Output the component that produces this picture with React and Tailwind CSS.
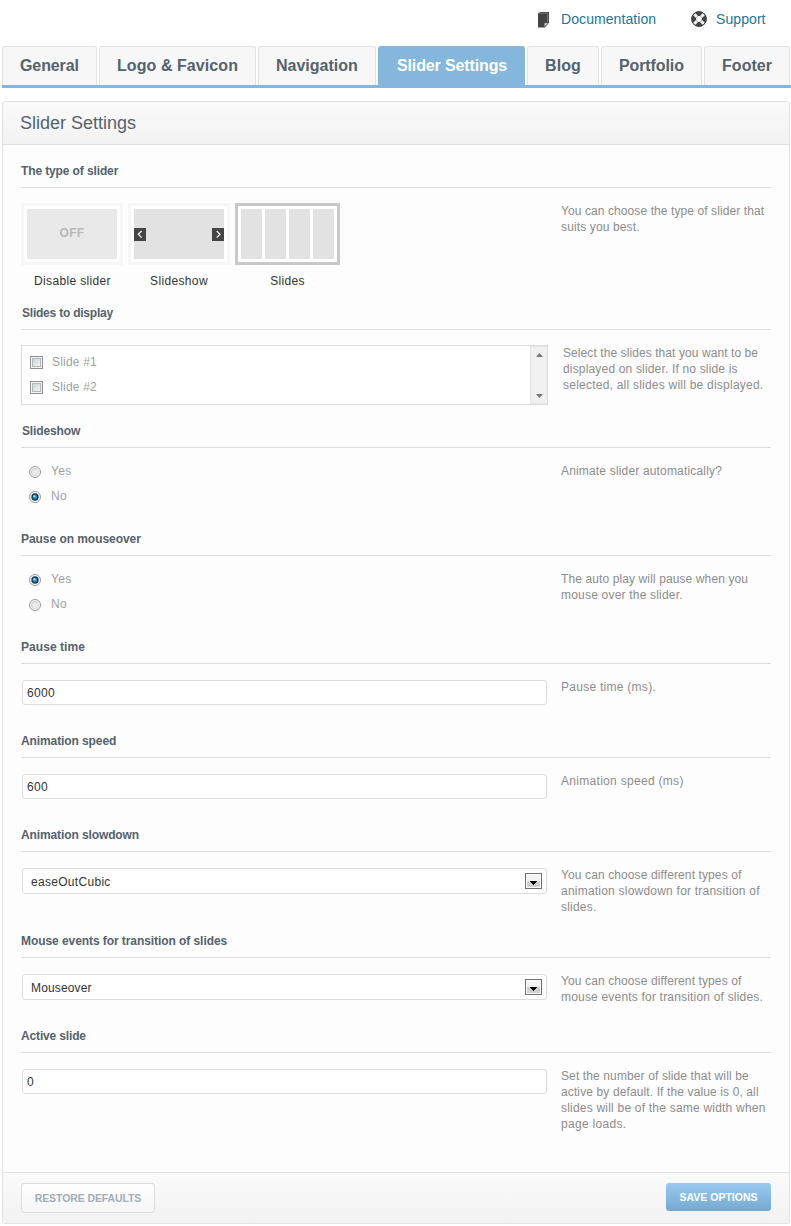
import React from 'react';

const tabs = [
  { label: 'General', cls: 'w-[95px] pl-[17px] tracking-[-0.1px]' },
  { label: 'Logo & Favicon', cls: 'w-[157px] pl-[17px] tracking-[0.07px]' },
  { label: 'Navigation', cls: 'w-[118px] pl-[17px]' },
  { label: 'Slider Settings', cls: 'w-[147px] pl-[18px] tracking-[-0.13px]', active: true },
  { label: 'Blog', cls: 'w-[72px] pl-[17px] tracking-[0.1px]' },
  { label: 'Portfolio', cls: 'w-[101px] pl-[17px] tracking-[-0.1px]' },
  { label: 'Footer', cls: 'w-[86px] pl-[17px] tracking-[0.05px]' },
];

function Tab({ label, cls, active }) {
  return (
    <a
      className={`h-[39px] shrink-0 rounded-t-[3px] border border-b-0 pt-[9px] text-base leading-5 font-bold whitespace-nowrap ${cls} ${
        active ? 'border-[#85b7dd] bg-[#85b7dd] text-white' : 'border-[#e2e2e2] bg-[#f7f7f7] text-[#54626e]'
      }`}
    >
      {label}
    </a>
  );
}

function Section({ title, titleCls = '', height, help, helpPad = '', children }) {
  return (
    <section className={`px-[18px] ${height}`}>
      <h3 className={`h-[25px] border-b border-[#dcdcdc] text-xs leading-4 font-bold text-[#54626e] ${titleCls}`}>{title}</h3>
      <div className="flex">
        <div className="w-[540px] shrink-0">{children}</div>
        <div className={`pt-[15px] text-xs leading-4 whitespace-nowrap text-[#8c8c8c] ${helpPad}`}>
          {help.map(([line, tracking]) => (
            <div key={line} className={tracking}>{line}</div>
          ))}
        </div>
      </div>
    </section>
  );
}

function Radio({ label, checked }) {
  return (
    <label className="flex h-[25px] items-start pl-2 text-xs leading-4 tracking-[0.3px] text-[#a0a0a0]">
      <svg className="mt-[3px] mr-[10px] h-3 w-3" viewBox="0 0 12 12">
        <circle cx="6" cy="6" r="5.5" fill="#f8f8f8" stroke="#97999b" strokeWidth="1" />
        {checked ? (
          <>
            <circle cx="6" cy="6" r="3.7" fill="#16395c" />
            <circle cx="6" cy="6" r="2.3" fill="#2384bf" />
            <circle cx="5.4" cy="5.2" r="1.2" fill="#8ed8f2" />
          </>
        ) : (
          <>
            <circle cx="6" cy="6" r="4" fill="#cfd1d4" />
            <circle cx="6.4" cy="6.5" r="3.3" fill="#e9e9eb" />
          </>
        )}
      </svg>
      {label}
    </label>
  );
}

function Check({ label }) {
  return (
    <label className="flex h-[25px] items-start pl-2 text-xs leading-4 tracking-[0.2px] text-[#a0a0a0]">
      <span className="mt-[2px] mr-[9px] flex h-[13px] w-[13px] items-center justify-center border border-[#8e8f8f] bg-[#f4f4f4]">
        <span className="h-[9px] w-[9px] border border-[#b4b9bf] bg-linear-to-br from-[#cdd1d8] to-[#f6f6f6]" />
      </span>
      {label}
    </label>
  );
}

function TextBox({ value }) {
  return (
    <div className="mt-4 ml-px h-[25px] w-[525px] rounded-[3px] border border-[#dcdcdc] bg-white pl-1 text-xs leading-[24px] tracking-[0.3px] text-[#333]">
      {value}
    </div>
  );
}

function SelectBox({ value, tracking }) {
  return (
    <div className="mt-4 ml-px flex h-[26px] w-[525px] justify-between rounded-[3px] border border-[#dcdcdc] bg-white pr-1 pl-2 text-xs leading-[26px] text-[#333]">
      <span className={tracking}>{value}</span>
      <span className="mt-1 flex h-4 w-[17px] border border-[#707070] bg-white p-px">
        <span className="flex h-full w-full justify-center bg-linear-to-b from-[#f3f3f3] from-50% to-[#cfcfcf] to-50% pt-[6px]">
          <svg width="7" height="4" viewBox="0 0 7 4" shapeRendering="crispEdges">
            <path d="M0 0h7v1h-1v1h-1v1h-1v1h-1v-1h-1v-1h-1v-1h-1z" fill="#000" />
          </svg>
        </span>
      </span>
    </div>
  );
}

function Thumb({ label, border, width, tracking, children }) {
  return (
    <div className={`flex shrink-0 flex-col items-center ${width}`}>
      <div className={`h-[62px] w-full border-[3px] bg-white p-[3px] ${border}`}>{children}</div>
      <span className={`mt-2 text-xs leading-4 whitespace-nowrap text-[#333] ${tracking}`}>{label}</span>
    </div>
  );
}

function Chevron({ d }) {
  return (
    <svg className="h-[13px] w-3 bg-[#444]" viewBox="0 0 12 13">
      <path d={d} fill="none" stroke="#f2f2f2" strokeWidth="1.3" />
    </svg>
  );
}

function DocIcon() {
  return (
    <svg width="12" height="16" viewBox="0 0 12 16">
      <path d="M0 1.5L2 0H11v10.5L7 15.5H0z" fill="#444" />
      <path d="M1 1.2h8.6v9" fill="none" stroke="#8a8a8a" strokeWidth=".8" />
      <path d="M6.3 14.8V11h4z" fill="#eee" stroke="#555" strokeWidth=".6" />
    </svg>
  );
}

function SupportIcon() {
  return (
    <svg width="16" height="16" viewBox="0 0 16 16">
      <circle cx="8" cy="8" r="5.3" fill="none" stroke="#444" strokeWidth="4.8" />
      <path d="M2.9 2.9l2.9 2.9M10.2 10.2l2.9 2.9M13.1 2.9l-2.9 2.9M5.8 10.2l-2.9 2.9" stroke="#f2f2f2" strokeWidth="3" />
      <circle cx="8" cy="8" r="7.3" fill="none" stroke="#444" strokeWidth="1" />
    </svg>
  );
}

export default function App() {
  return (
    <div className="h-[1226px] w-[791px] overflow-hidden bg-white pl-[2px] font-['Liberation_Sans',Arial,sans-serif]">
      <div className="flex h-[46px] items-start pt-[11px] text-sm leading-4 tracking-[0.08px] text-[#21759b]">
        <a className="ml-[536px] flex w-[152px] items-start">
          <span className="mr-[11px] pt-px"><DocIcon /></span>
          Documentation
        </a>
        <a className="flex items-start">
          <span className="mr-[9px] ml-px"><SupportIcon /></span>
          Support
        </a>
      </div>
      <nav className="flex h-[42px] gap-[2px] border-b-[3px] border-[#85b7dd]">
        {tabs.map((t) => (
          <Tab key={t.label} {...t} />
        ))}
      </nav>

      <main className="mt-[13px] h-[1123px] w-[788px] rounded-[3px] border border-[#e2e2e2] bg-[#fdfdfd]">
        <h2 className="h-[43px] rounded-t-[2px] border-b border-[#e0e0e0] bg-linear-to-b from-[#fafafa] to-[#f2f2f2] pl-[17px] text-lg leading-[42px] text-[#54626e]">
          Slider Settings
        </h2>
        <div className="pt-[18px]">
          <Section
            title="The type of slider"
            titleCls="tracking-[-0.12px]"
            height="h-[142px]"
            help={[['You can choose the type of slider that', 'tracking-[0.09px]'], ['suits you best.', 'tracking-[0.13px]']]}
          >
            <div className="flex gap-[5px] pt-[15px]">
              <Thumb label="Disable slider" border="border-[#f7f7f7]" width="w-[102px]" tracking="tracking-[0.35px] pl-px">
                <div className="h-full bg-[#e9e9e9] text-center text-xs leading-[49px] font-bold tracking-[0.3px] text-[#b8b8b8]">OFF</div>
              </Thumb>
              <Thumb label="Slideshow" border="border-[#f7f7f7]" width="w-[102px]" tracking="tracking-[0.35px]">
                <div className="flex h-full items-center justify-between bg-[#e2e2e2]">
                  <Chevron d="M7.6 3l-3.3 3.3 3.3 3.3" />
                  <Chevron d="M4.7 3l3.3 3.3-3.3 3.3" />
                </div>
              </Thumb>
              <Thumb label="Slides" border="border-[#c8c8c8]" width="w-[105px]" tracking="tracking-[0.3px]">
                <div className="grid h-full grid-cols-4 gap-[3px]">
                  <div className="bg-[#e2e2e2]" />
                  <div className="bg-[#e2e2e2]" />
                  <div className="bg-[#e2e2e2]" />
                  <div className="bg-[#e2e2e2]" />
                </div>
              </Thumb>
            </div>
          </Section>
          <Section
            title="Slides to display"
            titleCls="pl-px tracking-[-0.22px]"
            height="h-[118px]"
            helpPad="pl-[2px]"
            help={[
              ['Select the slides that you want to be', 'tracking-[0.08px]'],
              ['displayed on slider. If no slide is', 'tracking-[0.17px]'],
              ['selected, all slides will be displayed.', 'tracking-[0.23px]'],
            ]}
          >
            <div className="mt-[15px] flex h-[60px] w-[527px] justify-between border border-[#dcdcdc] bg-white">
              <div className="pt-2">
                <Check label="Slide #1" />
                <Check label="Slide #2" />
              </div>
              <div className="flex w-[17px] flex-col items-center justify-between border border-r-0 border-[#e6e6e6] bg-[#f0f0f0] pt-[6px] pb-[5px]">
                <svg width="7" height="4" viewBox="0 0 7 4"><path d="M0 4L3.5 0 7 4z" fill="#777" /></svg>
                <svg width="7" height="4" viewBox="0 0 7 4"><path d="M0 0h7L3.5 4z" fill="#777" /></svg>
              </div>
            </div>
          </Section>
          <Section
            title="Slideshow"
            titleCls="pl-px tracking-[-0.13px]"
            height="h-[108px]"
            help={[['Animate slider automatically?', 'tracking-[0.17px]']]}
          >
            <div className="pt-[15px]">
              <Radio label="Yes" />
              <Radio label="No" checked />
            </div>
          </Section>
          <Section
            title="Pause on mouseover"
            titleCls="tracking-[-0.05px]"
            height="h-[108px]"
            help={[['The auto play will pause when you', 'tracking-[0.11px]'], ['mouse over the slider.', 'tracking-[0.2px]']]}
          >
            <div className="pt-[15px]">
              <Radio label="Yes" checked />
              <Radio label="No" />
            </div>
          </Section>
          <Section title="Pause time" titleCls="tracking-[0.05px]" height="h-[94px]" help={[['Pause time (ms).', 'tracking-[0.27px]']]}>
            <TextBox value="6000" />
          </Section>
          <Section title="Animation speed" titleCls="tracking-[-0.1px]" height="h-[94px]" help={[['Animation speed (ms)', 'tracking-[0.3px]']]}>
            <TextBox value="600" />
          </Section>
          <Section
            title="Animation slowdown"
            titleCls="tracking-[-0.11px]"
            height="h-[106px]"
            help={[
              ['You can choose different types of', 'tracking-[0.11px]'],
              ['animation slowdown for transition of', 'tracking-[0.22px]'],
              ['slides.', 'tracking-[0.2px]'],
            ]}
          >
            <SelectBox value="easeOutCubic" tracking="tracking-[0.3px]" />
          </Section>
          <Section
            title="Mouse events for transition of slides"
            titleCls="tracking-[-0.07px]"
            height="h-[95px]"
            help={[['You can choose different types of', 'tracking-[0.11px]'], ['mouse events for transition of slides.', 'tracking-[0.19px]']]}
          >
            <SelectBox value="Mouseover" tracking="tracking-[0.15px]" />
          </Section>
          <Section
            title="Active slide"
            titleCls="tracking-[-0.15px]"
            height="h-[144px]"
            help={[
              ['Set the number of slide that will be', 'tracking-[0.12px]'],
              ['active by default. If the value is 0, all', 'tracking-[0.12px]'],
              ['slides will be of the same width when', 'tracking-[0.21px]'],
              ['page loads.', 'tracking-[0.3px]'],
            ]}
          >
            <TextBox value="0" />
          </Section>
        </div>
        <footer className="flex h-[51px] items-start justify-between rounded-b-[2px] border-t border-[#e0e0e0] bg-linear-to-b from-[#fafafa] to-[#f2f2f2] px-[18px] pt-[10px] text-[10.5px] font-bold">
          <button className="h-[30px] w-[134px] rounded-[3px] border border-[#dcdcdc] bg-linear-to-b from-white to-[#f5f5f5] leading-[28px] tracking-[-0.1px] whitespace-nowrap text-[#a2adb5]">
            RESTORE DEFAULTS
          </button>
          <button className="h-[28px] w-[105px] rounded-[3px] bg-linear-to-b from-[#98caee] to-[#74a9d2] leading-[28px] whitespace-nowrap text-white">
            SAVE OPTIONS
          </button>
        </footer>
      </main>
    </div>
  );
}
